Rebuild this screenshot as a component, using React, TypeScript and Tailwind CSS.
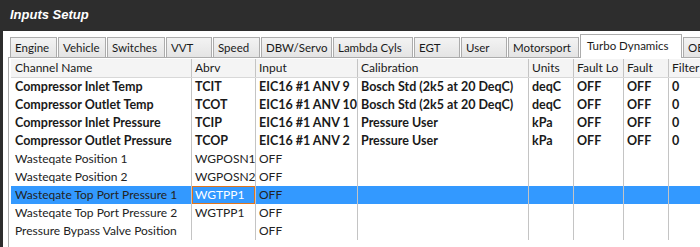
import React from "react"

type Row = {
  name: string
  abrv: string
  input: string
  cal: string
  units: string
  faultLo: string
  fault: string
  filter: string
  bold?: boolean
  selected?: boolean
}

const tabs = [
  { label: "Engine", w: "w-[47px]" },
  { label: "Vehicle", w: "w-[48px]" },
  { label: "Switches", w: "w-[58px]" },
  { label: "VVT", w: "w-[46px]" },
  { label: "Speed", w: "w-[47px]" },
  { label: "DBW/Servo", w: "w-[71px]" },
  { label: "Lambda Cyls", w: "w-[80px]" },
  { label: "EGT", w: "w-[46px]" },
  { label: "User", w: "w-[46px]" },
  { label: "Motorsport", w: "w-[71px]" },
  { label: "Turbo Dynamics", w: "w-[102px]", active: true },
  { label: "OBD", w: "w-[40px]" },
]

const rows: Row[] = [
  { name: "Compressor Inlet Temp", abrv: "TCIT", input: "EIC16 #1 ANV 9", cal: "Bosch Std (2k5 at 20 DeqC)", units: "deqC", faultLo: "OFF", fault: "OFF", filter: "0", bold: true },
  { name: "Compressor Outlet Temp", abrv: "TCOT", input: "EIC16 #1 ANV 10", cal: "Bosch Std (2k5 at 20 DeqC)", units: "deqC", faultLo: "OFF", fault: "OFF", filter: "0", bold: true },
  { name: "Compressor Inlet Pressure", abrv: "TCIP", input: "EIC16 #1 ANV 1", cal: "Pressure User", units: "kPa", faultLo: "OFF", fault: "OFF", filter: "0", bold: true },
  { name: "Compressor Outlet Pressure", abrv: "TCOP", input: "EIC16 #1 ANV 2", cal: "Pressure User", units: "kPa", faultLo: "OFF", fault: "OFF", filter: "0", bold: true },
  { name: "Wasteqate Position 1", abrv: "WGPOSN1", input: "OFF", cal: "", units: "", faultLo: "", fault: "", filter: "" },
  { name: "Wasteqate Position 2", abrv: "WGPOSN2", input: "OFF", cal: "", units: "", faultLo: "", fault: "", filter: "" },
  { name: "Wasteqate Top Port Pressure 1", abrv: "WGTPP1", input: "OFF", cal: "", units: "", faultLo: "", fault: "", filter: "", selected: true },
  { name: "Wasteqate Top Port Pressure 2", abrv: "WGTPP1", input: "OFF", cal: "", units: "", faultLo: "", fault: "", filter: "" },
  { name: "Pressure Bypass Valve Position", abrv: "", input: "OFF", cal: "", units: "", faultLo: "", fault: "", filter: "" },
]

const grid = "grid grid-cols-[180px_64px_102px_171px_45px_50px_45px_1fr]"
const cell = "border-l border-[#c4c4c4] pl-[3px] whitespace-nowrap overflow-hidden"

export default function App() {
  return (
    <div className="w-[700px] h-[247px] overflow-hidden bg-white font-['Lato','Noto_Sans',sans-serif] text-[12px] text-[#1a1a1a]">
      <div className="h-[31px] bg-[#2d2d2d] flex items-center pl-[10px] pb-[1px]">
        <span className="font-['Liberation_Sans',Arial,sans-serif] font-bold italic text-[13px] text-white">
          Inputs Setup
        </span>
      </div>

      <div className="flex h-[216px]">
        <div className="w-[3px] bg-[#2d2d2d]" />
        <div className="flex-1 flex flex-col pl-[5px] pt-[3px] min-w-0">
          {/* tab strip */}
          <div className="flex items-end h-[23px] pl-[2px] gap-[1px] text-[11.5px]">
            {tabs.map((t) =>
              t.active ? (
                <div
                  key={t.label}
                  className={`${t.w} shrink-0 h-[24px] -mb-[1px] relative z-10 bg-white border border-b-0 border-[#acacac] pl-[6px] pt-[2px] leading-[18px] whitespace-nowrap`}
                >
                  {t.label}
                </div>
              ) : (
                <div
                  key={t.label}
                  className={`${t.w} shrink-0 h-[20px] bg-gradient-to-b from-[#f3f3f3] to-[#e4e4e4] border border-b-0 border-[#acacac] pl-[4px] leading-[19px] whitespace-nowrap overflow-hidden`}
                >
                  {t.label}
                </div>
              )
            )}
          </div>

          <div className="flex-1 border-l border-t border-[#acacac] pt-[1px] pl-[2px] min-w-0">
            <div className={`${grid} h-[19px] bg-[#f4f4f4] border-b border-[#d8d8d8] leading-[18px]`}>
              <div className="pl-[4px]">Channel Name</div>
              <div className={cell}>Abrv</div>
              <div className={cell}>Input</div>
              <div className={cell}>Calibration</div>
              <div className={cell}>Units</div>
              <div className={cell}>Fault Lo</div>
              <div className={cell}>Fault</div>
              <div className={cell}>Filter</div>
            </div>

            {rows.map((r) => (
              <div
                key={r.name}
                className={`${grid} h-[18px] leading-[18px] ${r.bold ? "font-bold text-[12.5px]" : "text-[#222]"} ${r.selected ? "bg-[#3399ff]" : ""}`}
              >
                <div className="pl-[4px] whitespace-nowrap overflow-hidden">{r.name}</div>
                {r.selected ? (
                  <div className="border-l border-[#c4c4c4] flex">
                    <div className="flex-1 shadow-[inset_0_0_0_1px_#e0741c] pl-[3px] text-white whitespace-nowrap">
                      {r.abrv}
                    </div>
                  </div>
                ) : (
                  <div className={cell}>{r.abrv}</div>
                )}
                <div className={cell}>{r.input}</div>
                <div className={cell}>{r.cal}</div>
                <div className={cell}>{r.units}</div>
                <div className={cell}>{r.faultLo}</div>
                <div className={cell}>{r.fault}</div>
                <div className={cell}>{r.filter}</div>
              </div>
            ))}
          </div>
        </div>
      </div>
    </div>
  )
}
